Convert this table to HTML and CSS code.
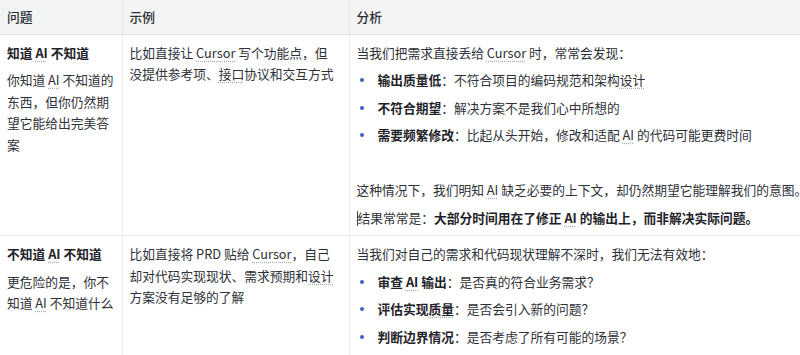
FILE: index.html
```html
<!DOCTYPE html>
<html lang="zh-CN">
<head>
<meta charset="utf-8">
<title>问题 示例 分析</title>
<link rel="stylesheet" href="styles.css">
</head>
<body>
<table class="grid">
  <colgroup>
    <col class="c1">
    <col class="c2">
    <col class="c3">
  </colgroup>
  <thead>
    <tr>
      <th>问题</th>
      <th>示例</th>
      <th>分析</th>
    </tr>
  </thead>
  <tbody>
    <tr>
      <td class="q">
        <p class="title">知道 <span class="term">AI</span> 不知道</p>
        <p>你知道 <span class="term">AI</span> 不知道的东西，但你仍然期望它能给出完美答案</p>
      </td>
      <td class="ex">
        <p>比如直接让 <span class="term">Cursor</span> 写个功能点，但没提供参考项、<span class="term">接口</span>协议和交互方式</p>
      </td>
      <td class="an">
        <p>当我们把需求直接丢给 <span class="term">Cursor</span> 时，常常会发现：</p>
        <ul class="list">
          <li><b>输出质量低</b>：不符合项目的编码规范和架构<span class="term">设计</span></li>
          <li><b>不符合期望</b>：解决方案不是我们心中所想的</li>
          <li><b>需要频繁修改</b>：比起从头开始，修改和适配 <span class="term">AI</span> 的代码可能更费时间</li>
        </ul>
        <p class="empty"></p>
        <p>这种情况下，我们明知 <span class="term">AI</span> 缺乏必要的上下文，却仍然期望它能理解我们的意图。</p>
        <p><span class="caret"></span>结果常常是：<b>大部分时间用在了修正 <span class="term">AI</span> 的输出上，而非解决实际问题。</b></p>
      </td>
    </tr>
    <tr>
      <td class="q">
        <p class="title">不知道 <span class="term">AI</span> 不知道</p>
        <p>更危险的是，你不知道 <span class="term">AI</span> 不知道什么</p>
      </td>
      <td class="ex">
        <p>比如直接将 PRD 贴给 <span class="term">Cursor</span>，自己却对代码实现现状、需求预期和<span class="term">设计</span>方案没有足够的了解</p>
      </td>
      <td class="an">
        <p>当我们对自己的需求和代码现状理解不深时，我们无法有效地：</p>
        <ul class="list">
          <li><b>审查 <span class="term">AI</span> 输出</b>：是否真的符合业务需求？</li>
          <li><b>评估实现<span class="term">质量</span></b>：是否会引入新的问题？</li>
          <li><b>判断边界情况</b>：是否考虑了所有可能的场景？</li>
        </ul>
      </td>
    </tr>
  </tbody>
</table>
</body>
</html>
```
FILE: styles.css
```css
html, body {
  margin: 0;
  padding: 0;
  overflow: hidden;
  background: #ffffff;
}
body {
  font-family: "Noto Sans CJK SC", "Noto Sans", sans-serif;
  font-size: 12.75px;
  line-height: 21.5px;
  color: #2e3138;
}
.grid {
  border-collapse: collapse;
  table-layout: fixed;
  width: 860px;
}
.c1 { width: 122px; }
.c2 { width: 227px; }
.c3 { width: 511px; }
.grid th {
  background: #f3f4f5;
  font-weight: 500;
  text-align: left;
  padding: 6px 7px 6px 7px;
  height: 21px;
  color: #2b2e33;
  border-left: 1px solid #e6e7e9;
  border-bottom: 1px solid #e3e4e6;
}
.grid td {
  vertical-align: top;
  padding: 7px 7px 7px 7px;
  border-left: 1px solid #ececee;
  border-bottom: 1px solid #e6e7e9;
}
.grid td.q {
  padding-right: 3px;
}
.grid td.ex {
  padding-right: 12px;
}
.grid th:first-child,
.grid td:first-child {
  border-left: none;
}
.grid p {
  margin: 0 0 6px 0;
}
.grid td > :last-child {
  margin-bottom: 0;
}
.title {
  font-weight: 700;
  color: #1f2329;
}
b {
  font-weight: 700;
  color: #1f2329;
}
.empty {
  height: 21.5px;
}
.list {
  list-style: none;
  margin: 0 0 6px 0;
  padding: 0;
}
.list li {
  position: relative;
  padding-left: 21px;
  margin-bottom: 6px;
}
.list li::before {
  content: "";
  position: absolute;
  left: 3px;
  top: 9px;
  width: 4px;
  height: 4px;
  border-radius: 50%;
  background: #3a62c8;
}
.term {
  text-decoration: underline dotted #a9adb3;
  text-underline-offset: 3px;
}
.caret {
  display: inline-block;
  width: 0;
  height: 15px;
  border-left: 1px solid #444;
  vertical-align: -3px;
}
```
